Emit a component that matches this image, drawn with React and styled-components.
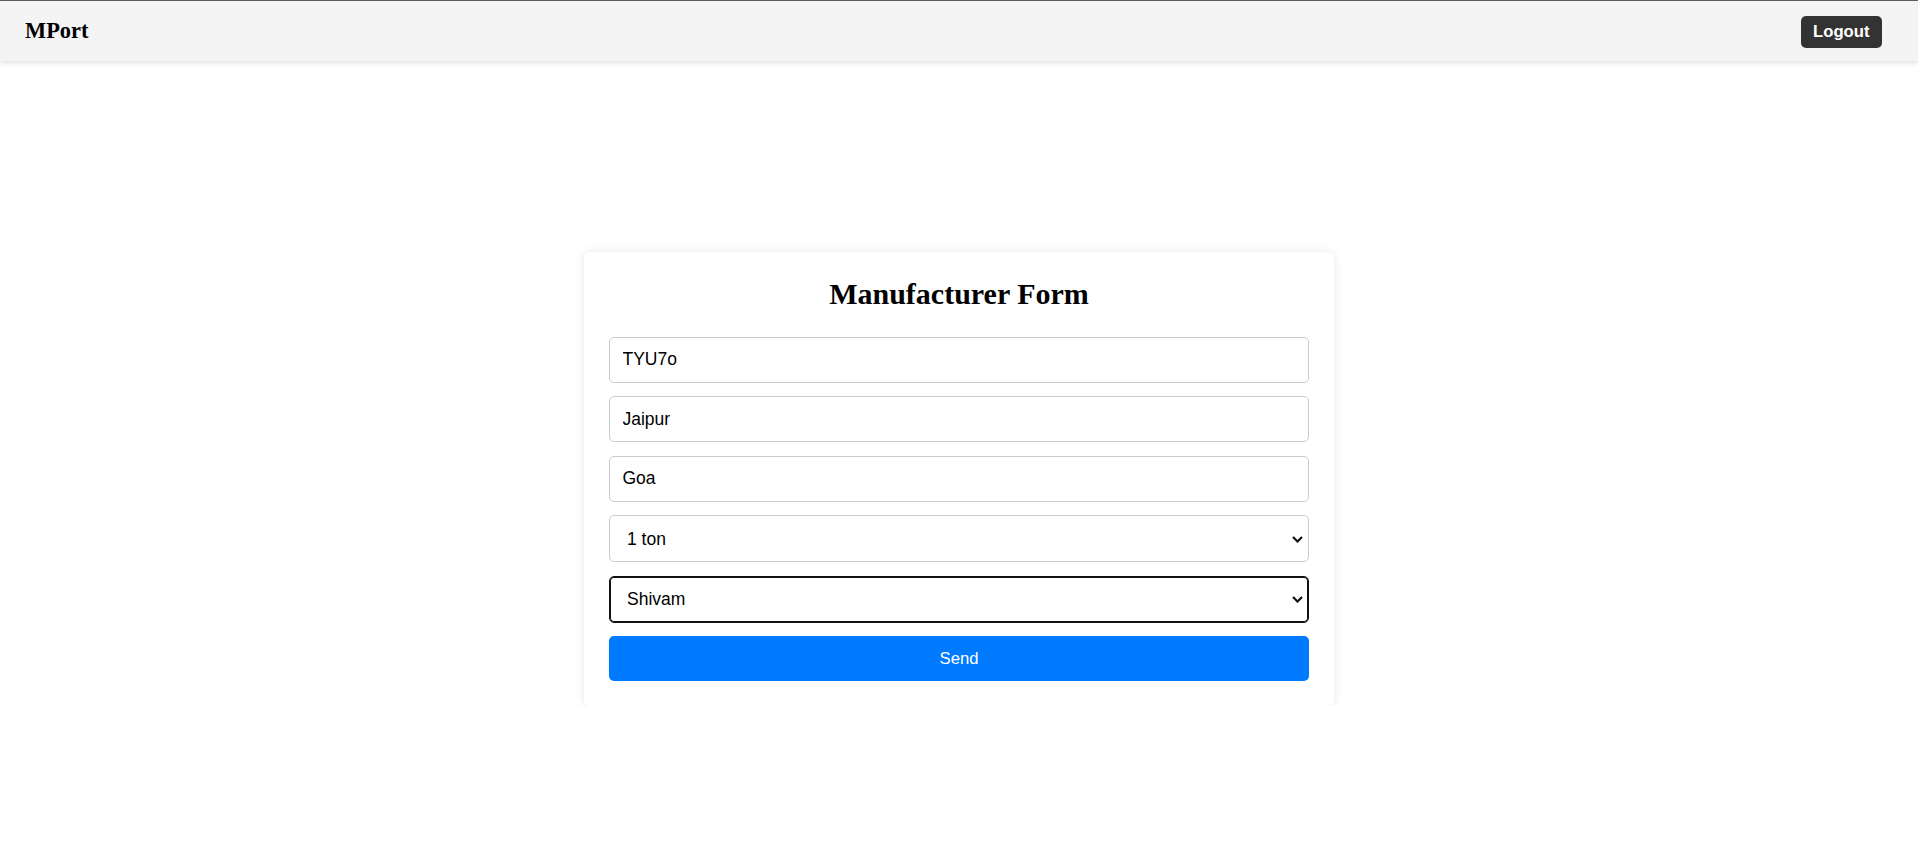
import React from "react";
import styled, { createGlobalStyle } from "styled-components";

const Global = createGlobalStyle`
  html, body { margin: 0; padding: 0; background: #fff; }
  body { font-family: "Liberation Serif", "Times New Roman", serif; color: #000; }
  * { box-sizing: border-box; }
`;

const Header = styled.header`
  height: 61px;
  border-top: 1px solid #5c5c5c;
  background: #f4f4f4;
  box-shadow: 0 2px 5px rgba(0, 0, 0, 0.12);
  display: flex;
  align-items: center;
  justify-content: space-between;
  padding: 0 25px;
  position: relative;
  z-index: 1;
`;

const Logo = styled.div`
  font-family: "Liberation Serif", "Times New Roman", serif;
  font-weight: bold;
  font-size: 22.4px;
  color: #000;
`;

const LogoutButton = styled.button`
  font-family: "Liberation Sans", Arial, sans-serif;
  font-weight: bold;
  font-size: 16.67px;
  color: #fff;
  background: #333;
  border: none;
  border-radius: 5px;
  height: 32px;
  padding: 0 12.5px;
  margin-right: 11px;
  margin-top: 1px;
  cursor: pointer;
`;

const Main = styled.main`
  display: flex;
  justify-content: center;
  padding-top: 191px;
`;

const Card = styled.div`
  width: 750px;
  background: #fff;
  padding: 25px;
  border-radius: 6px;
  box-shadow: 0 0 10px rgba(0, 0, 0, 0.1);
`;

const Title = styled.h2`
  margin: 0 0 25px;
  text-align: center;
  font-family: "Liberation Serif", "Times New Roman", serif;
  font-weight: bold;
  font-size: 30px;
  line-height: 34.5px;
`;

const Form = styled.form`
  display: flex;
  flex-direction: column;
  gap: 13.5px;
`;

const fieldBase = `
  width: 100%;
  padding: 0 12.5px;
  font-family: "Liberation Sans", Arial, sans-serif;
  font-size: 17.5px;
  color: #000;
  background: #fff;
  border-radius: 5px;
  outline: none;
`;

const Input = styled.input`
  ${fieldBase}
  height: 46px;
  border: 1px solid #ccc;
`;

const SelectWrap = styled.div`
  position: relative;
  width: 100%;
`;

const Select = styled.select`
  ${fieldBase}
  display: block;
  height: 47px;
  padding-left: 17px;
  padding-right: 30px;
  appearance: none;
  -webkit-appearance: none;
  border: 1px solid ${(p) => (p.$focused ? "#111" : "#ccc")};
  box-shadow: ${(p) => (p.$focused ? "inset 0 0 0 1px #111" : "none")};
`;

const Chevron = styled.svg`
  position: absolute;
  right: 6px;
  top: 50%;
  width: 11px;
  height: 7px;
  margin-top: -3px;
  pointer-events: none;
`;

const SendButton = styled.button`
  width: 100%;
  height: 45px;
  border: none;
  border-radius: 5px;
  background: #007bff;
  color: #fff;
  font-family: "Liberation Sans", Arial, sans-serif;
  font-size: 16.67px;
  cursor: pointer;
`;

function SelectField({ focused, value, options }) {
  return (
    <SelectWrap>
      <Select $focused={focused} defaultValue={value}>
        {options.map((o) => (
          <option key={o}>{o}</option>
        ))}
      </Select>
      <Chevron viewBox="0 0 11 7" aria-hidden="true">
        <path d="M1 1 L5.5 5.5 L10 1" fill="none" stroke="#111" strokeWidth="2.2" />
      </Chevron>
    </SelectWrap>
  );
}

export default function App() {
  return (
    <>
      <Global />
      <Header>
        <Logo>MPort</Logo>
        <LogoutButton>Logout</LogoutButton>
      </Header>
      <Main>
        <Card>
          <Title>Manufacturer Form</Title>
          <Form onSubmit={(e) => e.preventDefault()}>
            <Input defaultValue="TYU7o" />
            <Input defaultValue="Jaipur" />
            <Input defaultValue="Goa" />
            <SelectField value="1 ton" options={["1 ton", "2 ton"]} />
            <SelectField focused value="Shivam" options={["Shivam"]} />
            <SendButton type="submit">Send</SendButton>
          </Form>
        </Card>
      </Main>
    </>
  );
}
